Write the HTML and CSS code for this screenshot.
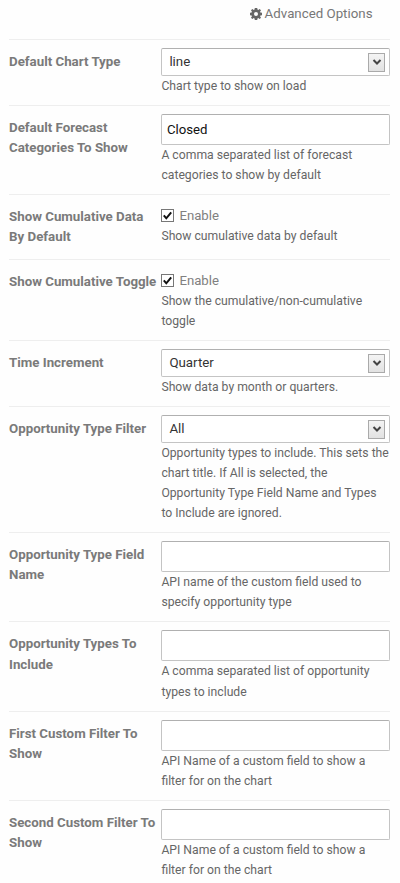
FILE: index.html
```html
<!DOCTYPE html>
<html lang="en">
<head>
  <meta charset="UTF-8" />
  <meta name="viewport" content="width=device-width, initial-scale=1" />
  <title>Advanced Options</title>
  <link rel="stylesheet" href="styles.css">
</head>
<body>
  <div class="top-bar">
    <svg class="gear" viewBox="0 0 24 24" aria-hidden="true">
      <path fill-rule="evenodd" d="M9.600 0h4.800l.6 3.200 1.600.7L19.300 2 22 4.700l-1.900 2.700.7 1.600 3.200.6v4.800l-3.200.6-.7 1.600 1.900 2.700-2.700 2.700-2.700-1.900-1.600.7-.6 3.200H9.600l-.6-3.200-1.600-.7L4.700 22 2 19.300l1.900-2.700-.7-1.600-3.200-.6V9.600L3.200 9l.7-1.600L2 4.700 4.700 2l2.700 1.900L9 3.200zM12 8a4 4 0 1 0 0 8 4 4 0 0 0 0-8z"/>
    </svg>
    <span>Advanced Options</span>
  </div>

  <form class="options">
    <div class="row">
      <label class="name" for="chartType">Default Chart Type</label>
      <div class="field">
        <div class="select-wrap">
          <select id="chartType"><option>line</option><option>bar</option></select>
          <span class="arrow"><svg viewBox="0 0 10 8"><path d="M1.500 2 5 5.500 8.500 2"/></svg></span>
        </div>
        <p class="help">Chart type to show on load</p>
      </div>
    </div>

    <div class="row">
      <label class="name" for="categories">Default Forecast Categories To Show</label>
      <div class="field">
        <input type="text" id="categories" value="Closed" />
        <p class="help">A comma separated list of forecast categories to show by default</p>
      </div>
    </div>

    <div class="row check-row">
      <span class="name">Show Cumulative Data By&nbsp;Default</span>
      <div class="field">
        <label class="check">
          <input type="checkbox" checked />
          <svg class="box" viewBox="0 0 11 11"><path d="M1.800 5.300 4.300 8.300 9.200 2.300"/></svg>
          Enable
        </label>
        <p class="help">Show cumulative data by default</p>
      </div>
    </div>

    <div class="row check-row">
      <span class="name">Show Cumulative Toggle</span>
      <div class="field">
        <label class="check">
          <input type="checkbox" checked />
          <svg class="box" viewBox="0 0 11 11"><path d="M1.800 5.300 4.300 8.300 9.200 2.300"/></svg>
          Enable
        </label>
        <p class="help">Show the cumulative/non-cumulative toggle</p>
      </div>
    </div>

    <div class="row">
      <label class="name" for="increment">Time Increment</label>
      <div class="field">
        <div class="select-wrap">
          <select id="increment"><option>Quarter</option><option>Month</option></select>
          <span class="arrow"><svg viewBox="0 0 10 8"><path d="M1.500 2 5 5.500 8.500 2"/></svg></span>
        </div>
        <p class="help">Show data by month or quarters.</p>
      </div>
    </div>

    <div class="row">
      <label class="name" for="typeFilter">Opportunity Type Filter</label>
      <div class="field">
        <div class="select-wrap">
          <select id="typeFilter"><option>All</option></select>
          <span class="arrow"><svg viewBox="0 0 10 8"><path d="M1.500 2 5 5.500 8.500 2"/></svg></span>
        </div>
        <p class="help">Opportunity types to include. This sets the chart title. If All is selected, the Opportunity Type Field Name and Types to&nbsp;Include are ignored.</p>
      </div>
    </div>

    <div class="row">
      <label class="name" for="typeField">Opportunity Type Field Name</label>
      <div class="field">
        <input type="text" id="typeField" />
        <p class="help">API name of the custom field used to specify opportunity type</p>
      </div>
    </div>

    <div class="row">
      <label class="name" for="types">Opportunity Types To Include</label>
      <div class="field">
        <input type="text" id="types" />
        <p class="help">A comma separated list of opportunity types to include</p>
      </div>
    </div>

    <div class="row">
      <label class="name" for="filter1">First Custom Filter To Show</label>
      <div class="field">
        <input type="text" id="filter1" />
        <p class="help">API Name of a custom field to show a filter&nbsp;for on the chart</p>
      </div>
    </div>

    <div class="row">
      <label class="name" for="filter2">Second Custom Filter To Show</label>
      <div class="field">
        <input type="text" id="filter2" />
        <p class="help">API Name of a custom field to show a filter&nbsp;for on the chart</p>
      </div>
    </div>
  </form>
</body>
</html>
```
FILE: styles.css
```css
:root {
  --text: #666;
  --label: #7a7a7a;
  --line: #eee;
  --border: #c4c4c4;
}
* {
  box-sizing: border-box;
}
body {
  margin: 0;
  padding: 0 10px 0 9px;
  height: 883px;
  overflow: hidden;
  background: #fefefe;
  color: var(--text);
  font-family: Roboto, Arial, sans-serif;
  font-size: 12.2px;
  line-height: 20.1px;
}
.top-bar {
  display: flex;
  justify-content: flex-end;
  align-items: center;
  gap: 3px;
  height: 38.5px;
  padding: 0 17.5px 10px 0;
  color: #777;
  font-size: 13.3px;
}
.gear {
  width: 12px;
  height: 12px;
  fill: #666;
}
.row {
  display: flex;
  border-top: 1px solid var(--line);
  padding: 8px 0 9.1px;
}
.name {
  width: 152.4px;
  flex-shrink: 0;
  padding-top: 4px;
  color: var(--label);
  font-size: 13.3px;
  font-weight: bold;
}
.field {
  flex: 1;
  min-width: 0;
}
.help {
  margin: 0;
}
input[type="text"], select {
  display: block;
  width: 100%;
  margin: 0;
  border: 1px solid var(--border);
  border-top-color: #b0b0b0;
  border-radius: 2px;
  background: #fff;
  font-family: inherit;
  font-size: 13.3px;
  outline: none;
}
input[type="text"] {
  height: 31px;
  padding: 1px 4.5px 0;
  font-size: 13.2px;
  color: #111;
}
select {
  height: 28px;
  padding: 0 7px;
  color: #333;
  appearance: none;
}
.select-wrap {
  position: relative;
}
.arrow {
  position: absolute;
  top: 5px;
  right: 5px;
  width: 17px;
  height: 19px;
  display: flex;
  align-items: center;
  justify-content: center;
  border: 1px solid #aaa;
  background: linear-gradient(#f4f4f4, #e2e2e2);
  pointer-events: none;
}
.arrow svg {
  width: 10px;
  height: 8px;
  fill: none;
  stroke: #444;
  stroke-width: 2;
}
.check-row {
  padding: 11px 0 8.6px;
}
.check-row .name {
  padding: 1px 0 3px;
}
.check {
  display: flex;
  align-items: center;
  gap: 5px;
  height: 20px;
  color: #808080;
  font-size: 13.2px;
}
.check input {
  position: absolute;
  opacity: 0;
}
.box {
  width: 13px;
  height: 13px;
  border: 1px solid #777;
  background: #fff;
  fill: none;
  stroke: #111;
  stroke-width: 2;
}
```
